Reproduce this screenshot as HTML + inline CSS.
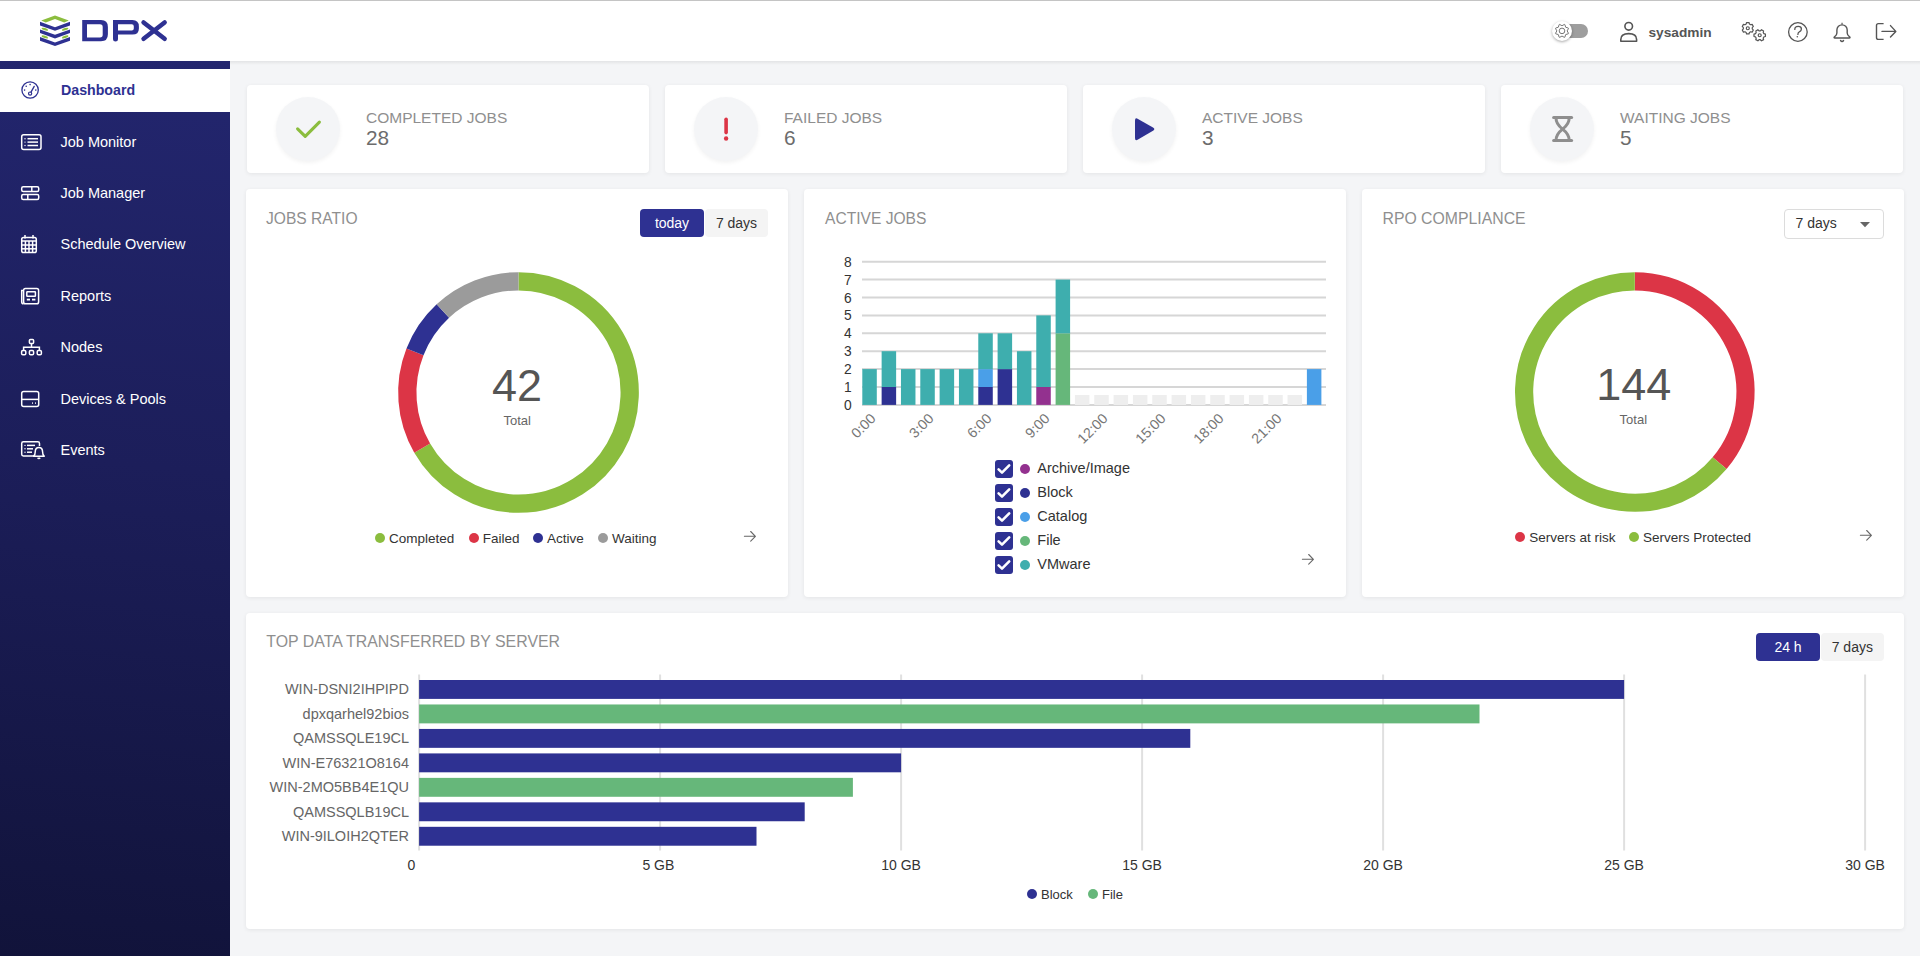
<!DOCTYPE html>
<html><head><meta charset="utf-8"><style>
*{box-sizing:border-box}
html,body{margin:0;padding:0}
body{width:1920px;height:956px;overflow:hidden;position:relative;background:#f4f5f7;font-family:"Liberation Sans",sans-serif;color:#333}
.abs{position:absolute}
.txt{position:absolute;white-space:nowrap;line-height:1}
.card{position:absolute;background:#fff;border-radius:4px;box-shadow:0 1px 4px rgba(0,0,0,0.07)}
.dot{position:absolute;width:10px;height:10px;border-radius:50%}
svg{position:absolute;overflow:visible}
</style></head><body>
<div class="abs" style="left:0;top:0;width:1920px;height:1px;background:#c4c4c4"></div>
<div class="abs" style="left:0;top:1px;width:1920px;height:60px;background:#fff"></div>
<div class="abs" style="left:0;top:61px;width:230px;height:895px;background:linear-gradient(186deg,#23266f 0%,#1c1e5a 45%,#11133a 100%)"></div>
<div class="abs" style="left:230px;top:61px;width:1690px;height:4px;background:linear-gradient(rgba(0,0,0,0.07),rgba(0,0,0,0))"></div>
<svg style="left:35px;top:12px" width="40" height="40" viewBox="0 0 40 40">
<polygon fill="#8bbd3e" points="6.2,8.6 20,3.6 33.8,8.6 29.2,10.4 20,7.1 10.8,10.4"/>
<polygon fill="#2e3192" points="5,9.8 20,15.2 35,9.8 35,13.4 20,18.8 5,13.4"/>
<polygon fill="#2e3192" points="5,17.4 20,22.8 35,17.4 35,21 20,26.4 5,21"/>
<polygon fill="#2e3192" points="5,25.1 20,30.4 35,25.1 35,28.7 20,34 5,28.7"/>
<ellipse cx="9.8" cy="17.2" rx="3.4" ry="1.15" fill="#8bbd3e" transform="rotate(17 9.8 17.2)"/>
<ellipse cx="30.2" cy="17.2" rx="3.4" ry="1.15" fill="#8bbd3e" transform="rotate(-17 30.2 17.2)"/>
<ellipse cx="9.8" cy="24.9" rx="3.4" ry="1.15" fill="#8bbd3e" transform="rotate(17 9.8 24.9)"/>
<ellipse cx="30.2" cy="24.9" rx="3.4" ry="1.15" fill="#8bbd3e" transform="rotate(-17 30.2 24.9)"/>
</svg>
<svg style="left:80px;top:18px" width="92" height="26" viewBox="0 0 92 26">
<path fill="#2e3192" fill-rule="evenodd" d="M2.2,2.1 H21 Q27.9,2.1 27.9,9 V16.2 Q27.9,23.2 21,23.2 H2.2 Z M7,6.3 V19.5 H20 Q22.7,19.5 22.7,16.8 V9 Q22.7,6.3 20,6.3 Z"/>
<path fill="#2e3192" fill-rule="evenodd" d="M33,2.1 H52.4 Q58.9,2.1 58.9,8.6 V10.4 Q58.9,16.6 52.4,16.6 H38 V21.2 Q38,23.4 35.5,23.4 Q33,23.4 33,21.2 Z M38,6.3 V12.6 H51.8 Q53.8,12.6 53.8,10.6 V8.3 Q53.8,6.3 51.8,6.3 Z"/>
<line x1="63.6" y1="4.5" x2="84.6" y2="20.8" stroke="#2e3192" stroke-width="4.6" stroke-linecap="round"/>
<line x1="84.6" y1="4.5" x2="63.6" y2="20.8" stroke="#2e3192" stroke-width="4.6" stroke-linecap="round"/>
</svg>
<div class="abs" style="left:0;top:69px;width:230px;height:43px;background:#fff"></div>
<div class="txt" style="left:61.00px;top:82.98px;font-size:14.2px;color:#2e3192;font-weight:bold;">Dashboard</div>
<svg style="left:16px;top:76px" width="30" height="28" viewBox="16 76 30 28">
<circle cx="30.1" cy="90" r="8.2" fill="none" stroke="#2e3192" stroke-width="1.3"/>
<circle cx="30.1" cy="93.6" r="1.6" fill="none" stroke="#2e3192" stroke-width="1.2"/>
<line x1="31" y1="92.1" x2="34.2" y2="86.4" stroke="#2e3192" stroke-width="1.3" stroke-linecap="round"/>
<circle cx="24.6" cy="90.1" r="0.8" fill="#2e3192"/><circle cx="26.2" cy="86.2" r="0.8" fill="#2e3192"/>
<circle cx="30.1" cy="84.6" r="0.8" fill="#2e3192"/><circle cx="35.8" cy="90.1" r="0.8" fill="#2e3192"/>
</svg>
<div class="txt" style="left:60.50px;top:134.73px;font-size:14.5px;color:#fff;font-weight:normal;">Job Monitor</div>
<div class="txt" style="left:60.50px;top:185.73px;font-size:14.5px;color:#fff;font-weight:normal;">Job Manager</div>
<div class="txt" style="left:60.50px;top:237.23px;font-size:14.5px;color:#fff;font-weight:normal;">Schedule Overview</div>
<div class="txt" style="left:60.50px;top:288.73px;font-size:14.5px;color:#fff;font-weight:normal;">Reports</div>
<div class="txt" style="left:60.50px;top:340.23px;font-size:14.5px;color:#fff;font-weight:normal;">Nodes</div>
<div class="txt" style="left:60.50px;top:391.73px;font-size:14.5px;color:#fff;font-weight:normal;">Devices &amp; Pools</div>
<div class="txt" style="left:60.50px;top:442.73px;font-size:14.5px;color:#fff;font-weight:normal;">Events</div>
<svg style="left:0;top:120px" width="60" height="350" viewBox="0 120 60 350" fill="none" stroke="#fff" stroke-width="1.5">
<rect x="21.7" y="134.7" width="19.3" height="14.8" rx="2"/>
<line x1="27.5" y1="138.7" x2="38" y2="138.7"/><line x1="27.5" y1="142.1" x2="38" y2="142.1"/><line x1="27.5" y1="145.5" x2="38" y2="145.5"/>
<circle cx="25" cy="138.7" r="0.7" fill="#fff" stroke="none"/><circle cx="25" cy="142.1" r="0.7" fill="#fff" stroke="none"/><circle cx="25" cy="145.5" r="0.7" fill="#fff" stroke="none"/>
<rect x="21.7" y="186.8" width="17" height="4.8" rx="1.5"/><line x1="31.8" y1="186.8" x2="31.8" y2="191.6"/>
<rect x="21.7" y="194.6" width="17" height="4.8" rx="1.5"/><line x1="27.8" y1="194.6" x2="27.8" y2="199.4"/>
<rect x="21.7" y="237.6" width="14.6" height="15" rx="1.8"/><line x1="21.7" y1="241" x2="36.3" y2="241"/>
<line x1="25" y1="235" x2="25" y2="238.5"/><line x1="33" y1="235" x2="33" y2="238.5"/>
<line x1="25.4" y1="241" x2="25.4" y2="252.6"/><line x1="29" y1="241" x2="29" y2="252.6"/><line x1="32.6" y1="241" x2="32.6" y2="252.6"/>
<line x1="21.7" y1="245" x2="36.3" y2="245"/><line x1="21.7" y1="248.8" x2="36.3" y2="248.8"/>
<rect x="23.6" y="288.6" width="15" height="15.2" rx="1.8"/><path d="M23.6,290.5 H21.7 V302 Q21.7,303.8 23.6,303.8"/>
<rect x="26.8" y="291.8" width="8.6" height="4.4" rx="0.5"/><line x1="26.8" y1="299.6" x2="30" y2="299.6" stroke-width="1.8"/><line x1="32" y1="299.6" x2="35.4" y2="299.6" stroke-width="1.8"/>
<rect x="29.4" y="339.4" width="4.2" height="4.2" rx="1"/><line x1="31.5" y1="343.6" x2="31.5" y2="347.2"/><path d="M23.6,350.4 V347.2 H39.4 V350.4"/>
<rect x="21.6" y="350.4" width="4.2" height="4.4" rx="1.3"/><rect x="29.4" y="350.4" width="4.2" height="4.4" rx="1.3"/><rect x="37.2" y="350.4" width="4.2" height="4.4" rx="1.3"/>
<rect x="21.7" y="391.6" width="17" height="15" rx="2"/><line x1="21.7" y1="399.4" x2="38.7" y2="399.4"/>
<line x1="32.2" y1="403.2" x2="33" y2="403.2" stroke-width="1.7"/><line x1="35" y1="403.2" x2="35.8" y2="403.2" stroke-width="1.7"/>
<path d="M34.5,456 H23.4 Q21.7,456 21.7,454.3 V443.4 Q21.7,441.7 23.4,441.7 H37.8 Q39.5,441.7 39.5,443.4 V446"/>
<line x1="27" y1="445.4" x2="35" y2="445.4"/><line x1="27" y1="448.8" x2="33" y2="448.8"/><line x1="27" y1="452.2" x2="32" y2="452.2"/>
<circle cx="25" cy="445.4" r="0.7" fill="#fff" stroke="none"/><circle cx="25" cy="448.8" r="0.7" fill="#fff" stroke="none"/><circle cx="25" cy="452.2" r="0.7" fill="#fff" stroke="none"/>
<path d="M33.6,456.2 Q35.2,455 35.2,452 Q35.2,447.4 38.9,447.4 Q42.6,447.4 42.6,452 Q42.6,455 44.2,456.2 Z" stroke-linejoin="round"/>
<path d="M37.6,457.8 Q38.9,459.4 40.2,457.8"/>
</svg>
<div class="abs" style="left:1560px;top:24px;width:28px;height:14px;border-radius:7px;background:#9e9e9e"></div>
<div class="abs" style="left:1552px;top:21px;width:20px;height:20px;border-radius:50%;background:#fff;box-shadow:0 1px 3px rgba(0,0,0,0.35)"></div>
<svg style="left:1540px;top:10px" width="380" height="45" viewBox="1540 10 380 45" fill="none" stroke="#555" stroke-width="1.5">
<path d="M1562.04,25.70 L1564.39,24.43 L1564.89,24.63 L1565.65,27.19 L1565.71,27.25 L1568.27,28.01 L1568.47,28.51 L1567.20,30.86 L1567.20,30.94 L1568.47,33.29 L1568.27,33.79 L1565.71,34.55 L1565.65,34.61 L1564.89,37.17 L1564.39,37.37 L1562.04,36.10 L1561.96,36.10 L1559.61,37.37 L1559.11,37.17 L1558.35,34.61 L1558.29,34.55 L1555.73,33.79 L1555.53,33.29 L1556.80,30.94 L1556.80,30.86 L1555.53,28.51 L1555.73,28.01 L1558.29,27.25 L1558.35,27.19 L1559.11,24.63 L1559.61,24.43 L1561.96,25.70 Z" stroke="#666" stroke-width="0.9" stroke-linejoin="round"/>
<circle cx="1562" cy="30.9" r="2.8" stroke="#666" stroke-width="0.9"/>
<circle cx="1628.7" cy="26.3" r="3.8" stroke-width="1.6"/>
<path d="M1620.8,41.2 V39.4 Q1620.8,33.6 1628.7,33.6 Q1636.6,33.6 1636.6,39.4 V41.2 Z" stroke-width="1.6" stroke-linejoin="round"/>
<path d="M1746.14,24.07 L1746.58,22.53 L1749.02,22.53 L1749.46,24.07 L1750.60,24.72 L1752.15,24.34 L1753.36,26.44 L1752.25,27.59 L1752.25,28.91 L1753.36,30.06 L1752.15,32.16 L1750.60,31.78 L1749.46,32.43 L1749.02,33.97 L1746.58,33.97 L1746.14,32.43 L1745.00,31.78 L1743.45,32.16 L1742.24,30.06 L1743.35,28.91 L1743.35,27.59 L1742.24,26.44 L1743.45,24.34 L1745.00,24.72 Z" stroke-width="1.2" stroke-linejoin="round"/>
<circle cx="1747.8" cy="28.25" r="1.5" stroke-width="1.2"/>
<path d="M1760.36,30.82 L1761.51,29.71 L1763.61,30.92 L1763.23,32.47 L1763.88,33.61 L1765.42,34.05 L1765.42,36.49 L1763.88,36.93 L1763.23,38.07 L1763.61,39.62 L1761.51,40.83 L1760.36,39.72 L1759.04,39.72 L1757.89,40.83 L1755.79,39.62 L1756.17,38.07 L1755.52,36.93 L1753.98,36.49 L1753.98,34.05 L1755.52,33.61 L1756.17,32.47 L1755.79,30.92 L1757.89,29.71 L1759.04,30.82 Z" stroke-width="1.2" stroke-linejoin="round"/>
<circle cx="1759.7" cy="35.27" r="1.5" stroke-width="1.2"/>
<circle cx="1797.9" cy="32" r="9.3" stroke-width="1.3"/>
<path d="M1794.8,29.4 Q1794.8,26.4 1798.2,26.4 Q1801.4,26.4 1801.4,29 Q1801.4,30.8 1799.4,31.8 Q1797.9,32.6 1797.9,34.4" stroke-width="1.3" stroke-linecap="round"/>
<circle cx="1797.3" cy="36.8" r="0.8" fill="#555" stroke="none"/>
<path d="M1836.9,30 A5.15,5.15 0 0 1 1847.2,30 V33 C1847.2,35.2 1848.4,36 1849.6,36.8 C1850.4,37.4 1850,38 1849.2,38 H1834.9 C1834.1,38 1833.7,37.4 1834.5,36.8 C1835.7,36 1836.9,35.2 1836.9,33 Z" stroke-width="1.4" stroke-linejoin="round"/>
<line x1="1842.05" y1="22.8" x2="1842.05" y2="24.6" stroke-width="1.2"/>
<path d="M1840.5,40.5 Q1842.05,42.5 1843.6,40.5" stroke-width="1.3" stroke-linecap="round"/>
<path d="M1883.6,23.6 H1878.4 Q1876.5,23.6 1876.5,25.5 V37.5 Q1876.5,39.4 1878.4,39.4 H1883.6" stroke-width="1.4"/>
<path d="M1882,31.4 H1895.6 M1890.5,25.6 L1895.8,31.4 L1890.5,37.1" stroke-width="1.4" stroke-linecap="round" stroke-linejoin="round"/>
</svg>
<div class="txt" style="left:1648.50px;top:25.60px;font-size:13.7px;color:#555;font-weight:bold;">sysadmin</div>
<div class="card" style="left:247px;top:85px;width:402px;height:88px"></div>
<div class="abs" style="left:276px;top:97px;width:64px;height:64px;border-radius:50%;background:#f4f5f7;box-shadow:0 2px 4px rgba(0,0,0,0.05)"></div>
<div class="txt" style="left:366.00px;top:109.88px;font-size:15.5px;color:#8f8f8f;font-weight:normal;">COMPLETED JOBS</div>
<div class="txt" style="left:366.00px;top:128.39px;font-size:20.8px;color:#6c6c6c;font-weight:normal;">28</div>
<div class="card" style="left:665px;top:85px;width:402px;height:88px"></div>
<div class="abs" style="left:694px;top:97px;width:64px;height:64px;border-radius:50%;background:#f4f5f7;box-shadow:0 2px 4px rgba(0,0,0,0.05)"></div>
<div class="txt" style="left:784.00px;top:109.88px;font-size:15.5px;color:#8f8f8f;font-weight:normal;">FAILED JOBS</div>
<div class="txt" style="left:784.00px;top:128.39px;font-size:20.8px;color:#6c6c6c;font-weight:normal;">6</div>
<div class="card" style="left:1083px;top:85px;width:402px;height:88px"></div>
<div class="abs" style="left:1112px;top:97px;width:64px;height:64px;border-radius:50%;background:#f4f5f7;box-shadow:0 2px 4px rgba(0,0,0,0.05)"></div>
<div class="txt" style="left:1202.00px;top:109.88px;font-size:15.5px;color:#8f8f8f;font-weight:normal;">ACTIVE JOBS</div>
<div class="txt" style="left:1202.00px;top:128.39px;font-size:20.8px;color:#6c6c6c;font-weight:normal;">3</div>
<div class="card" style="left:1501px;top:85px;width:402px;height:88px"></div>
<div class="abs" style="left:1530px;top:97px;width:64px;height:64px;border-radius:50%;background:#f4f5f7;box-shadow:0 2px 4px rgba(0,0,0,0.05)"></div>
<div class="txt" style="left:1620.00px;top:109.88px;font-size:15.5px;color:#8f8f8f;font-weight:normal;">WAITING JOBS</div>
<div class="txt" style="left:1620.00px;top:128.39px;font-size:20.8px;color:#6c6c6c;font-weight:normal;">5</div>
<svg style="left:0;top:0" width="1920" height="200" viewBox="0 0 1920 200">
<polyline points="297.6,128.8 305.2,136.3 319.4,122.2" fill="none" stroke="#8bbd3e" stroke-width="3.1" stroke-linecap="round" stroke-linejoin="round"/>
<line x1="726.1" y1="119.2" x2="726.1" y2="132.6" stroke="#dc3546" stroke-width="3.6" stroke-linecap="round"/>
<circle cx="726.1" cy="138.5" r="2.2" fill="#dc3546"/>
<path d="M1135,120.6 Q1135,117.2 1138,118.9 L1153,127.6 Q1155.6,129.2 1153,130.8 L1138,139.6 Q1135,141.3 1135,137.9 Z" fill="#2e3192"/>
<g fill="none" stroke="#8e8e8e" stroke-width="3"><line x1="1553.6" y1="117.6" x2="1571.6" y2="117.6" stroke-linecap="round"/>
<line x1="1553.6" y1="140.6" x2="1571.6" y2="140.6" stroke-linecap="round"/>
<path d="M1556,118 Q1556,124 1562.6,129.1 Q1569.2,134.2 1569.2,140.4"/>
<path d="M1569.2,118 Q1569.2,124 1562.6,129.1 Q1556,134.2 1556,140.4"/></g>
</svg>
<div class="card" style="left:246px;top:189px;width:542px;height:408px"></div>
<div class="card" style="left:804px;top:189px;width:542px;height:408px"></div>
<div class="card" style="left:1362px;top:189px;width:542px;height:408px"></div>
<div class="txt" style="left:266.00px;top:210.79px;font-size:15.6px;color:#8f8f8f;font-weight:normal;">JOBS RATIO</div>
<div class="txt" style="left:825.00px;top:210.79px;font-size:15.6px;color:#8f8f8f;font-weight:normal;">ACTIVE JOBS</div>
<div class="txt" style="left:1382.50px;top:210.63px;font-size:15.8px;color:#8f8f8f;font-weight:normal;">RPO COMPLIANCE</div>
<div class="abs" style="left:640px;top:209px;width:64px;height:28px;border-radius:4px;background:#2e3192"></div>
<div class="abs" style="left:705px;top:209px;width:63px;height:28px;border-radius:4px;background:#f4f4f4"></div>
<div class="txt" style="left:372.00px;width:600px;text-align:center;top:216.15px;font-size:14px;color:#fff;font-weight:normal;">today</div>
<div class="txt" style="left:436.50px;width:600px;text-align:center;top:216.15px;font-size:14px;color:#333;font-weight:normal;">7 days</div>
<svg style="left:0;top:0" width="1920" height="600" viewBox="0 0 1920 600"><path d="M518.500,281.300 A111.2,111.2 0 1 1 422.198,448.100" fill="none" stroke="#8bbd3e" stroke-width="18.3"/><path d="M422.198,448.100 A111.2,111.2 0 0 1 414.987,351.874" fill="none" stroke="#dc3546" stroke-width="18.3"/><path d="M414.987,351.874 A111.2,111.2 0 0 1 442.865,310.985" fill="none" stroke="#2e3192" stroke-width="18.3"/><path d="M442.865,310.985 A111.2,111.2 0 0 1 518.500,281.300" fill="none" stroke="#9b9b9b" stroke-width="18.3"/><path d="M1634.800,281.300 A110.7,110.7 0 0 1 1719.601,463.157" fill="none" stroke="#dc3546" stroke-width="18.2"/><path d="M1719.601,463.157 A110.7,110.7 0 1 1 1634.800,281.300" fill="none" stroke="#8bbd3e" stroke-width="18.2"/></svg>
<div class="txt" style="left:217.00px;width:600px;text-align:center;top:363.31px;font-size:45px;color:#555;font-weight:normal;">42</div>
<div class="txt" style="left:217.20px;width:600px;text-align:center;top:414.00px;font-size:13px;color:#666;font-weight:normal;">Total</div>
<div class="txt" style="left:1333.80px;width:600px;text-align:center;top:362.11px;font-size:45px;color:#555;font-weight:normal;">144</div>
<div class="txt" style="left:1333.30px;width:600px;text-align:center;top:413.00px;font-size:13px;color:#666;font-weight:normal;">Total</div>
<div class="dot" style="left:375px;top:533px;background:#8bbd3e"></div>
<div class="txt" style="left:389.00px;top:531.67px;font-size:13.5px;color:#333;font-weight:normal;">Completed</div>
<div class="dot" style="left:468.8px;top:533px;background:#dc3546"></div>
<div class="txt" style="left:482.80px;top:531.67px;font-size:13.5px;color:#333;font-weight:normal;">Failed</div>
<div class="dot" style="left:532.9px;top:533px;background:#2e3192"></div>
<div class="txt" style="left:546.90px;top:531.67px;font-size:13.5px;color:#333;font-weight:normal;">Active</div>
<div class="dot" style="left:598px;top:533px;background:#9b9b9b"></div>
<div class="txt" style="left:612.00px;top:531.67px;font-size:13.5px;color:#333;font-weight:normal;">Waiting</div>
<div class="dot" style="left:1515.2px;top:532px;background:#dc3546"></div>
<div class="txt" style="left:1529.20px;top:530.87px;font-size:13.5px;color:#333;font-weight:normal;">Servers at risk</div>
<div class="dot" style="left:1628.9px;top:532px;background:#8bbd3e"></div>
<div class="txt" style="left:1642.90px;top:530.87px;font-size:13.5px;color:#333;font-weight:normal;">Servers Protected</div>
<svg style="left:0;top:0" width="1920" height="600" viewBox="0 0 1920 600"><path d="M744.4,536.3 H755.4 M750.6999999999999,531.5 L755.4,536.3 L750.6999999999999,541.0999999999999" fill="none" stroke="#666" stroke-width="1.1" stroke-linecap="round" stroke-linejoin="round"/><path d="M1302.4,559.3 H1313.4 M1308.7,554.5 L1313.4,559.3 L1308.7,564.0999999999999" fill="none" stroke="#666" stroke-width="1.1" stroke-linecap="round" stroke-linejoin="round"/><path d="M1860.4,535.3 H1871.4 M1866.7,530.5 L1871.4,535.3 L1866.7,540.0999999999999" fill="none" stroke="#666" stroke-width="1.1" stroke-linecap="round" stroke-linejoin="round"/></svg>
<div class="abs" style="left:1784px;top:209px;width:100px;height:30px;border:1px solid #dcdcdc;border-radius:4px;background:#fff"></div>
<div class="txt" style="left:1795.50px;top:215.95px;font-size:14px;color:#333;font-weight:normal;">7 days</div>
<svg style="left:0;top:0" width="1920" height="600" viewBox="0 0 1920 600"><polygon points="1860,222 1870,222 1865,227.2" fill="#666"/></svg>
<svg style="left:0;top:0" width="1920" height="600" viewBox="0 0 1920 600"><line x1="862.0" y1="404.90" x2="1326" y2="404.90" stroke="#d6d6d6" stroke-width="2"/><line x1="862.0" y1="387.00" x2="1326" y2="387.00" stroke="#d6d6d6" stroke-width="2"/><line x1="862.0" y1="369.10" x2="1326" y2="369.10" stroke="#d6d6d6" stroke-width="2"/><line x1="862.0" y1="351.20" x2="1326" y2="351.20" stroke="#d6d6d6" stroke-width="2"/><line x1="862.0" y1="333.30" x2="1326" y2="333.30" stroke="#d6d6d6" stroke-width="2"/><line x1="862.0" y1="315.40" x2="1326" y2="315.40" stroke="#d6d6d6" stroke-width="2"/><line x1="862.0" y1="297.50" x2="1326" y2="297.50" stroke="#d6d6d6" stroke-width="2"/><line x1="862.0" y1="279.60" x2="1326" y2="279.60" stroke="#d6d6d6" stroke-width="2"/><line x1="862.0" y1="261.70" x2="1326" y2="261.70" stroke="#d6d6d6" stroke-width="2"/><rect x="862.30" y="369.10" width="14.5" height="35.80" fill="#3eaeae"/><rect x="881.63" y="387.00" width="14.5" height="17.90" fill="#2e3192"/><rect x="881.63" y="351.20" width="14.5" height="35.80" fill="#3eaeae"/><rect x="900.96" y="369.10" width="14.5" height="35.80" fill="#3eaeae"/><rect x="920.29" y="369.10" width="14.5" height="35.80" fill="#3eaeae"/><rect x="939.62" y="369.10" width="14.5" height="35.80" fill="#3eaeae"/><rect x="958.95" y="369.10" width="14.5" height="35.80" fill="#3eaeae"/><rect x="978.28" y="387.00" width="14.5" height="17.90" fill="#2e3192"/><rect x="978.28" y="369.10" width="14.5" height="17.90" fill="#4a9fe8"/><rect x="978.28" y="333.30" width="14.5" height="35.80" fill="#3eaeae"/><rect x="997.61" y="369.10" width="14.5" height="35.80" fill="#2e3192"/><rect x="997.61" y="333.30" width="14.5" height="35.80" fill="#3eaeae"/><rect x="1016.94" y="351.20" width="14.5" height="53.70" fill="#3eaeae"/><rect x="1036.27" y="387.00" width="14.5" height="17.90" fill="#93318f"/><rect x="1036.27" y="315.40" width="14.5" height="71.60" fill="#3eaeae"/><rect x="1055.60" y="333.30" width="14.5" height="71.60" fill="#66b77a"/><rect x="1055.60" y="279.60" width="14.5" height="53.70" fill="#3eaeae"/><rect x="1074.93" y="395" width="14.5" height="10" fill="#eeeeee"/><rect x="1094.26" y="395" width="14.5" height="10" fill="#eeeeee"/><rect x="1113.59" y="395" width="14.5" height="10" fill="#eeeeee"/><rect x="1132.92" y="395" width="14.5" height="10" fill="#eeeeee"/><rect x="1152.25" y="395" width="14.5" height="10" fill="#eeeeee"/><rect x="1171.58" y="395" width="14.5" height="10" fill="#eeeeee"/><rect x="1190.91" y="395" width="14.5" height="10" fill="#eeeeee"/><rect x="1210.24" y="395" width="14.5" height="10" fill="#eeeeee"/><rect x="1229.57" y="395" width="14.5" height="10" fill="#eeeeee"/><rect x="1248.90" y="395" width="14.5" height="10" fill="#eeeeee"/><rect x="1268.23" y="395" width="14.5" height="10" fill="#eeeeee"/><rect x="1287.56" y="395" width="14.5" height="10" fill="#eeeeee"/><rect x="1306.89" y="369.10" width="14.5" height="35.80" fill="#4a9fe8"/></svg>
<div class="txt" style="left:251.80px;width:600px;text-align:right;top:398.92px;font-size:13.8px;color:#333;font-weight:normal;">0</div>
<div class="txt" style="left:251.80px;width:600px;text-align:right;top:381.02px;font-size:13.8px;color:#333;font-weight:normal;">1</div>
<div class="txt" style="left:251.80px;width:600px;text-align:right;top:363.12px;font-size:13.8px;color:#333;font-weight:normal;">2</div>
<div class="txt" style="left:251.80px;width:600px;text-align:right;top:345.22px;font-size:13.8px;color:#333;font-weight:normal;">3</div>
<div class="txt" style="left:251.80px;width:600px;text-align:right;top:327.32px;font-size:13.8px;color:#333;font-weight:normal;">4</div>
<div class="txt" style="left:251.80px;width:600px;text-align:right;top:309.42px;font-size:13.8px;color:#333;font-weight:normal;">5</div>
<div class="txt" style="left:251.80px;width:600px;text-align:right;top:291.52px;font-size:13.8px;color:#333;font-weight:normal;">6</div>
<div class="txt" style="left:251.80px;width:600px;text-align:right;top:273.62px;font-size:13.8px;color:#333;font-weight:normal;">7</div>
<div class="txt" style="left:251.80px;width:600px;text-align:right;top:255.72px;font-size:13.8px;color:#333;font-weight:normal;">8</div>
<div class="txt" style="left:667.66px;top:410.60px;width:200px;text-align:right;font-size:14.2px;color:#777;transform-origin:100% 0;transform:rotate(-45deg)">0:00</div>
<div class="txt" style="left:725.65px;top:410.60px;width:200px;text-align:right;font-size:14.2px;color:#777;transform-origin:100% 0;transform:rotate(-45deg)">3:00</div>
<div class="txt" style="left:783.64px;top:410.60px;width:200px;text-align:right;font-size:14.2px;color:#777;transform-origin:100% 0;transform:rotate(-45deg)">6:00</div>
<div class="txt" style="left:841.63px;top:410.60px;width:200px;text-align:right;font-size:14.2px;color:#777;transform-origin:100% 0;transform:rotate(-45deg)">9:00</div>
<div class="txt" style="left:899.62px;top:410.60px;width:200px;text-align:right;font-size:14.2px;color:#777;transform-origin:100% 0;transform:rotate(-45deg)">12:00</div>
<div class="txt" style="left:957.62px;top:410.60px;width:200px;text-align:right;font-size:14.2px;color:#777;transform-origin:100% 0;transform:rotate(-45deg)">15:00</div>
<div class="txt" style="left:1015.61px;top:410.60px;width:200px;text-align:right;font-size:14.2px;color:#777;transform-origin:100% 0;transform:rotate(-45deg)">18:00</div>
<div class="txt" style="left:1073.60px;top:410.60px;width:200px;text-align:right;font-size:14.2px;color:#777;transform-origin:100% 0;transform:rotate(-45deg)">21:00</div>
<div class="abs" style="left:995px;top:460px;width:18px;height:18px;border-radius:3px;background:#2e3192"></div>
<svg style="left:995px;top:460px" width="18" height="18" viewBox="0 0 18 18"><polyline points="3.6,9.4 7,12.6 14.2,5.4" fill="none" stroke="#fff" stroke-width="2.6" stroke-linecap="round" stroke-linejoin="round"/></svg>
<div class="dot" style="left:1020px;top:463.8px;background:#93318f"></div>
<div class="txt" style="left:1037.30px;top:460.73px;font-size:14.5px;color:#333;font-weight:normal;">Archive/Image</div>
<div class="abs" style="left:995px;top:484px;width:18px;height:18px;border-radius:3px;background:#2e3192"></div>
<svg style="left:995px;top:484px" width="18" height="18" viewBox="0 0 18 18"><polyline points="3.6,9.4 7,12.6 14.2,5.4" fill="none" stroke="#fff" stroke-width="2.6" stroke-linecap="round" stroke-linejoin="round"/></svg>
<div class="dot" style="left:1020px;top:487.8px;background:#2e3192"></div>
<div class="txt" style="left:1037.30px;top:484.73px;font-size:14.5px;color:#333;font-weight:normal;">Block</div>
<div class="abs" style="left:995px;top:508px;width:18px;height:18px;border-radius:3px;background:#2e3192"></div>
<svg style="left:995px;top:508px" width="18" height="18" viewBox="0 0 18 18"><polyline points="3.6,9.4 7,12.6 14.2,5.4" fill="none" stroke="#fff" stroke-width="2.6" stroke-linecap="round" stroke-linejoin="round"/></svg>
<div class="dot" style="left:1020px;top:511.8px;background:#4a9fe8"></div>
<div class="txt" style="left:1037.30px;top:508.73px;font-size:14.5px;color:#333;font-weight:normal;">Catalog</div>
<div class="abs" style="left:995px;top:532px;width:18px;height:18px;border-radius:3px;background:#2e3192"></div>
<svg style="left:995px;top:532px" width="18" height="18" viewBox="0 0 18 18"><polyline points="3.6,9.4 7,12.6 14.2,5.4" fill="none" stroke="#fff" stroke-width="2.6" stroke-linecap="round" stroke-linejoin="round"/></svg>
<div class="dot" style="left:1020px;top:535.8px;background:#66b77a"></div>
<div class="txt" style="left:1037.30px;top:532.73px;font-size:14.5px;color:#333;font-weight:normal;">File</div>
<div class="abs" style="left:995px;top:556px;width:18px;height:18px;border-radius:3px;background:#2e3192"></div>
<svg style="left:995px;top:556px" width="18" height="18" viewBox="0 0 18 18"><polyline points="3.6,9.4 7,12.6 14.2,5.4" fill="none" stroke="#fff" stroke-width="2.6" stroke-linecap="round" stroke-linejoin="round"/></svg>
<div class="dot" style="left:1020px;top:559.8px;background:#3eaeae"></div>
<div class="txt" style="left:1037.30px;top:556.73px;font-size:14.5px;color:#333;font-weight:normal;">VMware</div>
<div class="card" style="left:246px;top:613px;width:1658px;height:316px"></div>
<div class="txt" style="left:266.30px;top:633.74px;font-size:15.9px;color:#8f8f8f;font-weight:normal;">TOP DATA TRANSFERRED BY SERVER</div>
<div class="abs" style="left:1756px;top:633px;width:64px;height:28px;border-radius:4px;background:#2e3192"></div>
<div class="abs" style="left:1821px;top:633px;width:63px;height:28px;border-radius:4px;background:#f4f4f4"></div>
<div class="txt" style="left:1488.00px;width:600px;text-align:center;top:639.95px;font-size:14px;color:#fff;font-weight:normal;">24 h</div>
<div class="txt" style="left:1552.30px;width:600px;text-align:center;top:639.95px;font-size:14px;color:#333;font-weight:normal;">7 days</div>
<svg style="left:0;top:600px" width="1920" height="356" viewBox="0 600 1920 356"><line x1="419.10" y1="674.5" x2="419.10" y2="850.5" stroke="#e0e0e0" stroke-width="2"/><line x1="660.10" y1="674.5" x2="660.10" y2="850.5" stroke="#e0e0e0" stroke-width="2"/><line x1="901.10" y1="674.5" x2="901.10" y2="850.5" stroke="#e0e0e0" stroke-width="2"/><line x1="1142.10" y1="674.5" x2="1142.10" y2="850.5" stroke="#e0e0e0" stroke-width="2"/><line x1="1383.10" y1="674.5" x2="1383.10" y2="850.5" stroke="#e0e0e0" stroke-width="2"/><line x1="1624.10" y1="674.5" x2="1624.10" y2="850.5" stroke="#e0e0e0" stroke-width="2"/><line x1="1865.10" y1="674.5" x2="1865.10" y2="850.5" stroke="#e0e0e0" stroke-width="2"/><rect x="419.10" y="680.00" width="1205.00" height="18.9" fill="#2e3192"/><rect x="419.10" y="704.47" width="1060.40" height="18.9" fill="#66b77a"/><rect x="419.10" y="728.94" width="771.20" height="18.9" fill="#2e3192"/><rect x="419.10" y="753.41" width="482.00" height="18.9" fill="#2e3192"/><rect x="419.10" y="777.88" width="433.80" height="18.9" fill="#66b77a"/><rect x="419.10" y="802.35" width="385.60" height="18.9" fill="#2e3192"/><rect x="419.10" y="826.82" width="337.40" height="18.9" fill="#2e3192"/></svg>
<div class="txt" style="left:-191.00px;width:600px;text-align:right;top:682.33px;font-size:14.5px;color:#666;font-weight:normal;">WIN-DSNI2IHPIPD</div>
<div class="txt" style="left:-191.00px;width:600px;text-align:right;top:706.80px;font-size:14.5px;color:#666;font-weight:normal;">dpxqarhel92bios</div>
<div class="txt" style="left:-191.00px;width:600px;text-align:right;top:731.27px;font-size:14.5px;color:#666;font-weight:normal;">QAMSSQLE19CL</div>
<div class="txt" style="left:-191.00px;width:600px;text-align:right;top:755.74px;font-size:14.5px;color:#666;font-weight:normal;">WIN-E76321O8164</div>
<div class="txt" style="left:-191.00px;width:600px;text-align:right;top:780.21px;font-size:14.5px;color:#666;font-weight:normal;">WIN-2MO5BB4E1QU</div>
<div class="txt" style="left:-191.00px;width:600px;text-align:right;top:804.68px;font-size:14.5px;color:#666;font-weight:normal;">QAMSSQLB19CL</div>
<div class="txt" style="left:-191.00px;width:600px;text-align:right;top:829.15px;font-size:14.5px;color:#666;font-weight:normal;">WIN-9ILOIH2QTER</div>
<div class="txt" style="left:111.50px;width:600px;text-align:center;top:858.25px;font-size:14px;color:#333;font-weight:normal;">0</div>
<div class="txt" style="left:358.40px;width:600px;text-align:center;top:858.25px;font-size:14px;color:#333;font-weight:normal;">5 GB</div>
<div class="txt" style="left:601.10px;width:600px;text-align:center;top:858.25px;font-size:14px;color:#333;font-weight:normal;">10 GB</div>
<div class="txt" style="left:842.10px;width:600px;text-align:center;top:858.25px;font-size:14px;color:#333;font-weight:normal;">15 GB</div>
<div class="txt" style="left:1083.10px;width:600px;text-align:center;top:858.25px;font-size:14px;color:#333;font-weight:normal;">20 GB</div>
<div class="txt" style="left:1324.10px;width:600px;text-align:center;top:858.25px;font-size:14px;color:#333;font-weight:normal;">25 GB</div>
<div class="txt" style="left:1565.10px;width:600px;text-align:center;top:858.25px;font-size:14px;color:#333;font-weight:normal;">30 GB</div>
<div class="dot" style="left:1027px;top:889px;background:#2e3192"></div>
<div class="txt" style="left:1041.00px;top:887.80px;font-size:13px;color:#333;font-weight:normal;">Block</div>
<div class="dot" style="left:1088px;top:889px;background:#66b77a"></div>
<div class="txt" style="left:1102.00px;top:887.80px;font-size:13px;color:#333;font-weight:normal;">File</div>
</body></html>
